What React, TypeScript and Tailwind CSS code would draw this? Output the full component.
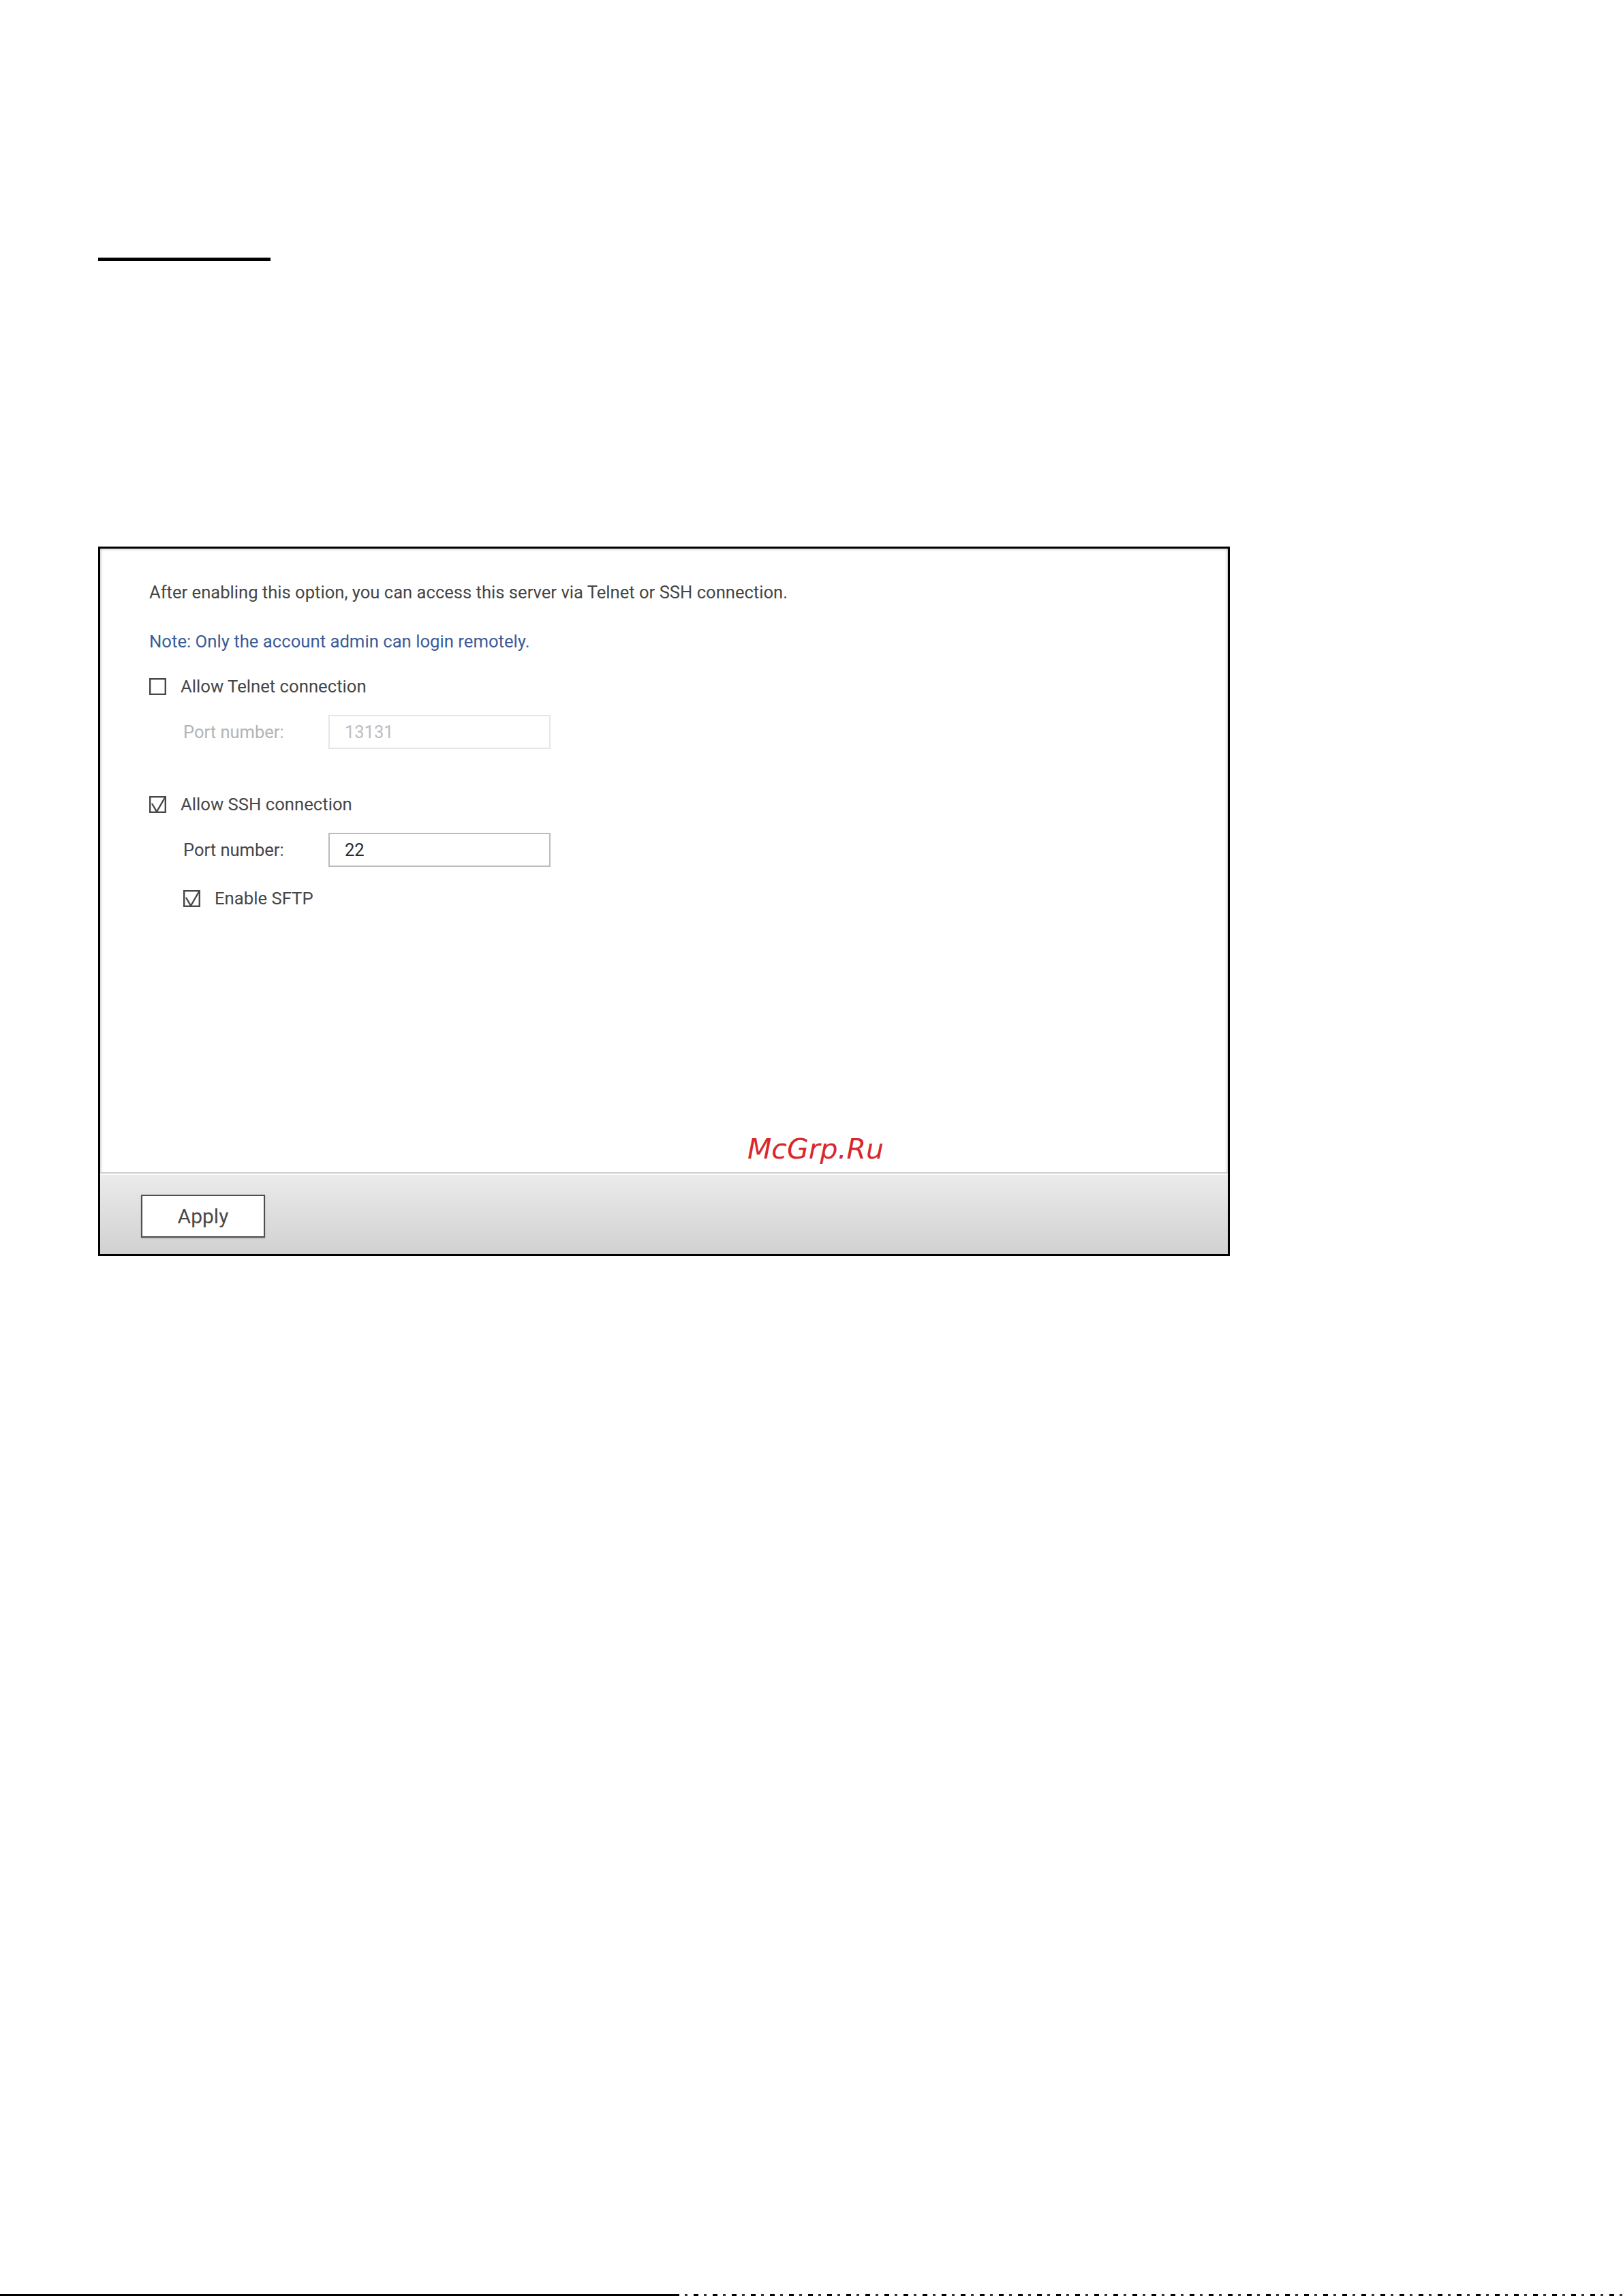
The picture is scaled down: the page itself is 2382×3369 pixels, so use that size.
import React from 'react';

const font = { fontFamily: 'Roboto, "Liberation Sans", sans-serif' };

function Box({ checked }: { checked: boolean }) {
  return (
    <svg width="25" height="25" viewBox="0 0 25 25" className="shrink-0">
      <rect x="1.2" y="1.2" width="22.6" height="22.6" fill="#fff" stroke="#474747" strokeWidth="2.4" />
      {checked && (
        <polyline points="4,11 11,23 23.5,1.5" fill="none" stroke="#474747" strokeWidth="2.4" />
      )}
    </svg>
  );
}

function CheckRow({ checked, label, className }: { checked: boolean; label: string; className?: string }) {
  return (
    <div className={'flex h-[40px] items-center ' + (className ?? '')}>
      <Box checked={checked} />
      <span className="ml-[21px] text-[25.7px] text-[#464646]">{label}</span>
    </div>
  );
}

function PortRow({ value, disabled, className }: { value: string; disabled?: boolean; className?: string }) {
  return (
    <div className={'flex h-[50px] items-center pl-[50px] ' + (className ?? '')}>
      <span className={'w-[213px] text-[25.5px] ' + (disabled ? 'text-[#b4b4b4]' : 'text-[#464646]')}>
        Port number:
      </span>
      <div
        className={
          'flex h-[50px] w-[326px] items-center border-2 pl-[22px] text-[25.5px] ' +
          (disabled ? 'border-[#e6e6e6] text-[#bdbdbd]' : 'border-[#bcbcbc] text-[#2a2a2a]')
        }
      >
        {value}
      </div>
    </div>
  );
}

export default function App() {
  return (
    <div className="relative flex h-[3369px] w-[2382px] flex-col bg-white" style={font}>
      <div className="ml-[144px] mt-[378px] h-[5px] w-[253px] bg-black" />

      <div className="ml-[144px] mt-[419px] flex h-[1041px] w-[1661px] flex-col border-[3px] border-black shadow-[inset_0_0_4px_rgba(0,0,0,0.35)]">
        <div className="flex-1 pl-[72px] pt-[44px]">
          <div className="flex h-[40px] items-center text-[25.6px] text-[#454545]">
            After enabling this option, you can access this server via Telnet or SSH connection.
          </div>
          <div className="mt-[32px] flex h-[40px] items-center text-[25.7px] text-[#3b5b98]">
            Note: Only the account admin can login remotely.
          </div>
          <CheckRow checked={false} label="Allow Telnet connection" className="mt-[26px]" />
          <PortRow value="13131" disabled className="mt-[22px]" />
          <CheckRow checked label="Allow SSH connection" className="mt-[61px]" />
          <PortRow value="22" className="mt-[22px]" />
          <div className="mt-[26px] pl-[50px]">
            <CheckRow checked label="Enable SFTP" />
          </div>
        </div>

        <div className="h-[120px] border-t-2 border-[#cfcfcf] bg-linear-to-b from-[#ebebeb] to-[#d1d1d1] pl-[60px] pt-[31px] shadow-[inset_0_2px_0_#fafafa]">
          <div className="flex h-[63px] w-[182px] items-center justify-center border-2 border-[#4e4e4e] bg-white text-[30px] text-[#484848] shadow-[0_1px_2px_rgba(0,0,0,0.25)]">
            Apply
          </div>
        </div>
      </div>

      <div
        className="absolute left-[1097px] top-[1666px] text-[41px] leading-none italic text-[#d8282c]"
        style={{ fontFamily: '"DejaVu Sans", sans-serif' }}
      >
        McGrp.Ru
      </div>

      <div className="mt-auto flex h-[3px] w-full">
        <div className="h-full w-[990px] bg-black" />
        <div className="h-full flex-1 bg-[repeating-linear-gradient(90deg,#000_0_7px,#fff_7px_15px,#333_15px_19px,#fff_19px_28px)]" />
      </div>
    </div>
  );
}
